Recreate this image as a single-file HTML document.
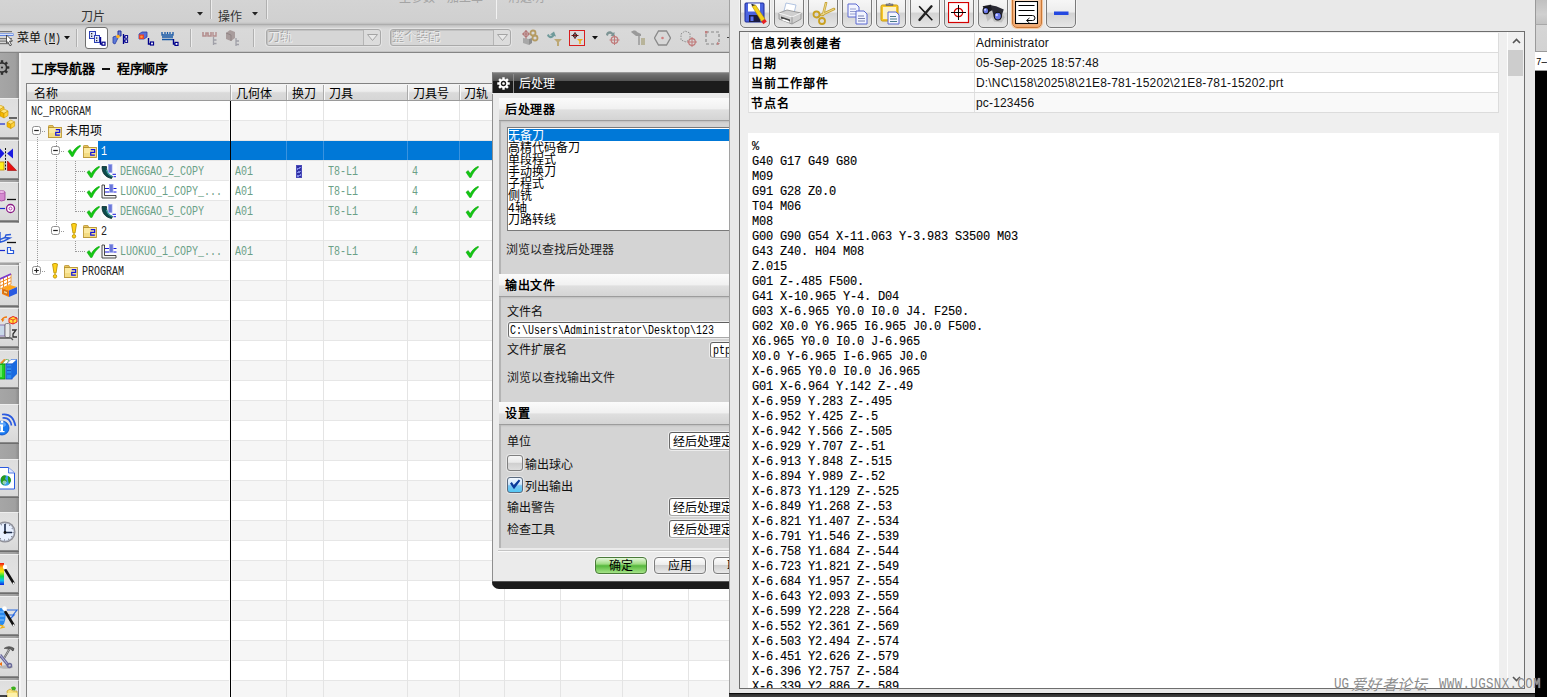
<!DOCTYPE html>
<html lang="zh-CN"><head><meta charset="utf-8"><title>NX</title>
<style>
*{box-sizing:border-box;margin:0;padding:0}
html,body{width:1547px;height:697px;overflow:hidden}
body{position:relative;background:#ebebeb;font-family:"Liberation Sans",sans-serif;font-size:12px;color:#000;line-height:1}
.a{position:absolute}
.t{position:absolute;white-space:nowrap;font-size:12px;line-height:12px}
.b{font-weight:bold}
.mono{font-family:"Liberation Mono",monospace}
.ss{font-family:"Liberation Mono",monospace;font-size:12px;display:inline-block;transform:scaleX(.8333);transform-origin:0 50%;letter-spacing:0}
/* top ribbon */
#ribbon{left:0;top:0;width:730px;height:25px;background:linear-gradient(#d4d4d4,#d0d0d0 22px,#bcbcbc 24px);border-bottom:1px solid #adadad}
#tbar{left:0;top:25px;width:730px;height:27px;background:linear-gradient(#bebebe 0,#d0d0d0 2px,#d9d9d9 4px,#d6d6d6 100%)}
#tbline{left:0;top:51px;width:730px;height:3px;background:linear-gradient(#c4c4c4 0 1px,#858585 1px 2px,#f6f6f6 2px 3px)}
.vsep{position:absolute;width:2px;border-left:1px solid #b0b0b0;border-right:1px solid #ececec}
.combo{position:absolute;height:17px;border:1px solid #a9a9a9;border-radius:3px;background:#d6d6d6;box-shadow:inset 1px 1px 0 #c2c2c2,0 0 0 1px #e3e3e3}
.combo .arr{position:absolute;right:0;top:0;width:17px;height:15px;border-left:1px solid #b5b5b5;background:#dcdcdc;border-radius:0 3px 3px 0}
/* left side bar */
#side{left:0;top:53px;width:19px;height:644px;background:linear-gradient(90deg,#a6a6a6,#a0a0a0 80%,#8a8a8a)}
#sidew{left:19px;top:53px;width:2px;height:644px;background:#f4f4f4}
.sbtn{position:absolute;left:0;width:19px;overflow:hidden;background:linear-gradient(#dedede,#e2e2e2 50%,#d8d8d8);border-top:1px solid #eee;border-right:1px solid #8a8a8a;border-bottom:1px solid #8a8a8a;box-shadow:0 1px 0 #6e6e6e}
/* navigator */
#nav{left:21px;top:53px;width:709px;height:644px;background:#ebebeb}
#tbl{left:26px;top:83px;width:704px;height:614px;background:#fff;border-top:1px solid #828282;border-left:1px solid #828282;overflow:hidden}
#thead{left:0;top:0;width:704px;height:17px;background:linear-gradient(#f4f4f4 0%,#ededed 45%,#dadada 55%,#d6d6d6 100%);border-bottom:1px solid #9a9a9a}
.hs{position:absolute;top:1px;width:2px;height:15px;border-left:1px solid #aaa;border-right:1px solid #fafafa}
.row{position:absolute;left:0;width:704px;height:20px;border-bottom:1px solid #e6e6e6}
.row.odd{background:#f6f6f6}
.cl{position:absolute;top:17px;width:1px;height:600px;background:#e4e4e4}
.gr{color:#5f9a7c}
/* dialog */
#dlg{left:492px;top:72px;width:238px;height:517px;background:#ebebeb;border-radius:0 0 0 7px;overflow:hidden}
.sech{position:absolute;left:7px;width:231px;height:23px;background:linear-gradient(#fbfbfb 0%,#f1f1f1 48%,#dfdfdf 55%,#d4d4d4 100%);border-bottom:1px solid #9c9c9c}
.secb{position:absolute;left:7px;width:231px;background:#d4d4d4;border-left:2px solid #b4b4b4;box-shadow:inset 0 2px 2px -1px #bdbdbd}
.inp{position:absolute;background:#fff;border:1px solid #8a8a8a;border-top-color:#5e5e5e;border-left-color:#6a6a6a;border-bottom-color:#a8a8a8;border-radius:3px;box-shadow:0 0 0 1px #ececec}
.btn{position:absolute;height:17px;border:1px solid #7e7e7e;border-radius:4px;background:linear-gradient(#fdfdfd 0%,#ededed 45%,#cfcfcf 50%,#e9e9e9 100%);box-shadow:0 0 0 1px #f6f6f6;text-align:center;font-size:12px;line-height:17px}
/* info window */
#info{left:729px;top:0;width:806px;height:693px;background:#e9e9e9;border-left:1px solid #a2a2a2}
#infobot{left:729px;top:693px;width:806px;height:4px;background:linear-gradient(#0c0c0c 0 1px,#2e2e2e 1px,#444 100%)}
.ib{position:absolute;top:-6px;width:30px;height:34px;border:1px solid #7a7a7a;border-radius:5px;background:linear-gradient(#fafafa 0%,#ededed 52%,#d3d3d3 58%,#e6e6e6 100%);box-shadow:0 0 0 1px #f4f4f4}
#list{left:739px;top:31px;width:786px;height:658px;background:#efefef;border:1px solid #6e6e6e}
.ir{position:absolute;margin-top:1px;left:8px;width:751px;height:20px;border-bottom:1px solid #dcdcdc;border-left:1px solid #e2e2e2;border-right:1px solid #dcdcdc;background:#fff}
.ir.alt{background:#f9f9f9}
.ir .k{position:absolute;left:2px;top:5px;font-weight:bold;font-size:12px;line-height:12px;white-space:nowrap;letter-spacing:1px}
.ir .v{position:absolute;left:227px;top:4px;font-size:12px;line-height:13px;white-space:nowrap;color:#111;letter-spacing:.17px}
.ir .s{position:absolute;left:225px;top:0;width:1px;height:19px;background:#e0e0e0}
#code{margin-top:1px;left:8px;top:100px;width:751px;height:555px;background:#fff;overflow:hidden}
#code pre{position:absolute;left:4px;top:7px;font-family:"Liberation Mono",monospace;font-size:12px;line-height:15px;letter-spacing:-.2px;color:#000;-webkit-text-stroke:.12px #000}
#sb{left:767px;top:0;width:17px;height:656px;background:#f0f0f0;border-left:1px solid #fdfdfd}
#thumb{left:0;top:18px;width:15px;height:26px;background:#cdcdcd}
/* right strip */
#rs{left:1535px;top:0;width:12px;height:697px;background:#000}

#dlg .b{letter-spacing:.7px;text-shadow:0 0 2px #fff,0 0 1px #fff}
</style></head><body>
<!-- ribbon -->
<div class="a" id="ribbon">
  <div class="t" style="left:81px;top:11px;color:#333">刀片</div>
  <svg class="a" style="left:197px;top:12px" width="6" height="4"><path d="M0 0h6L3 3.500z" fill="#222"/></svg>
  <div class="vsep" style="left:210px;top:0;height:19px"></div>
  <div class="t" style="left:218px;top:11px;color:#333">操作</div>
  <svg class="a" style="left:252px;top:12px" width="6" height="4"><path d="M0 0h6L3 3.500z" fill="#222"/></svg>
  <div class="vsep" style="left:266px;top:0;height:19px"></div>
  <div class="t" style="left:399px;top:-8px;color:#a4a4a4">主参数</div>
  <div class="t" style="left:447px;top:-8px;color:#a4a4a4">加工车</div>
  <div class="a" style="left:496px;top:0;width:1px;height:19px;background:#f2f2f2"></div>
  <div class="t" style="left:508px;top:-8px;color:#a4a4a4">消透明</div>
</div>
<div class="a" id="tbar">
  <!-- menu icon -->
  <svg class="a" style="left:0;top:5px" width="15" height="16" viewBox="0 0 15 16">
    <rect x="0" y="1" width="12" height="1.200" fill="#777"/><rect x="0" y="3.500" width="13.500" height="2.300" fill="#3f6fe6"/><rect x="0" y="4.200" width="13" height=".8" fill="#fff"/><rect x="0" y="8" width="12" height="1.200" fill="#777"/><rect x="0" y="10.500" width="12" height="1.200" fill="#777"/><rect x="0" y="13" width="9" height="1.200" fill="#777"/>
    <path d="M6.500 5l6 6h-3l2 4-1.600.8-2-4L6.500 13z" fill="#fff" stroke="#333" stroke-width=".8"/>
  </svg>
  <div class="t" style="left:17px;top:7px;color:#111">菜单<span class="ss" style="width:20px;margin-left:2px">(<u>M</u>)</span></div>
  <svg class="a" style="left:64px;top:11px" width="6" height="4"><path d="M0 0h6L3 3.500z" fill="#111"/></svg>
  <div class="vsep" style="left:76px;top:4px;height:18px"></div>
  <div class="a" style="left:85px;top:2px;width:23px;height:22px;background:#fff;border:1px solid #6f6f6f;border-radius:3px"></div>
  <!-- icon1: program order -->
  <svg class="a" style="left:89px;top:6px" width="17" height="16" viewBox="0 0 17 16">
    <rect x=".5" y=".5" width="6" height="7" fill="#dfe6fb" stroke="#2b3fb5"/><rect x="2" y="2" width="1.3" height="1.3" fill="#223"/><rect x="2" y="4.6" width="1.3" height="1.3" fill="#223"/>
    <rect x="5.5" y="4.5" width="5" height="7" fill="#dfe6fb" stroke="#2b3fb5"/><rect x="7" y="6.4" width="1.3" height="1.3" fill="#223"/><rect x="7" y="9" width="1.3" height="1.3" fill="#223"/>
    <path d="M11.5 6v7h2" fill="none" stroke="#00008b" stroke-width="1.4"/><rect x="13" y="11.2" width="3" height="3" fill="#fff" stroke="#00008b" stroke-width="1.2"/>
  </svg>
  <!-- icon2: tool view -->
  <svg class="a" style="left:112px;top:5px" width="17" height="18" viewBox="0 0 17 18">
    <path d="M6 1h3v5H6z" fill="#6f7fd0" stroke="#1f2f9b"/><path d="M1 7l3-1 2 2-3 6-2-1z" fill="#5b79d6" stroke="#2a3ea8" stroke-width=".8"/><circle cx="6" cy="6.5" r="1.8" fill="#ffb020"/>
    <path d="M11.5 4v10M11.5 7h3M11.5 11h3" fill="none" stroke="#00008b" stroke-width="1.3"/><rect x="13" y="5.6" width="2.6" height="2.6" fill="#fff" stroke="#00008b"/><rect x="13" y="9.8" width="2.6" height="2.6" fill="#fff" stroke="#00008b"/>
  </svg>
  <!-- icon3: geometry view -->
  <svg class="a" style="left:138px;top:5px" width="17" height="18" viewBox="0 0 17 18">
    <path d="M1 4l3-2h5v5l-3 2H1z" fill="#5a6fd8" stroke="#2a3ea8" stroke-width=".8"/><path d="M1 4.500h5V9H1z" fill="#e8402a"/><circle cx="3.5" cy="6.700" r="1.300" fill="#ff9a30"/>
    <path d="M10.500 8v6h3" fill="none" stroke="#00008b" stroke-width="1.4"/><rect x="12.500" y="12" width="3" height="3" fill="#fff" stroke="#00008b" stroke-width="1.2"/>
  </svg>
  <!-- icon4: method view -->
  <svg class="a" style="left:161px;top:5px" width="18" height="18" viewBox="0 0 18 18">
    <path d="M1 2v3h11V2M4 2v2M6.500 2v2M9 2v2" fill="none" stroke="#1557a6" stroke-width="1.3"/><path d="M1 7h11M1 9.500h11" stroke="#1557a6" stroke-width="1.4"/>
    <path d="M12.500 9v5h2" fill="none" stroke="#00008b" stroke-width="1.4"/><rect x="14" y="12.400" width="3" height="3" fill="#fff" stroke="#00008b" stroke-width="1.2"/>
  </svg>
  <div class="vsep" style="left:190px;top:4px;height:18px"></div>
  <!-- gray icons -->
  <svg class="a" style="left:202px;top:5px" width="18" height="18" viewBox="0 0 18 18">
    <path d="M1 2v4h3V3h2v3h3V2" fill="none" stroke="#b48f8f" stroke-width="1.6"/><path d="M11 2v4h3V2" fill="none" stroke="#b48f8f" stroke-width="1.4"/><path d="M11.500 7v8M11.500 10h3M11.500 13.500h3" stroke="#a0a0a8" stroke-width="1.3" fill="none"/>
  </svg>
  <svg class="a" style="left:224px;top:4px" width="18" height="19" viewBox="0 0 18 19">
    <path d="M2 4l4-3 5 2v6l-4 3-5-2z" fill="#a89c9c"/><path d="M2 4l5 2v6" fill="none" stroke="#8f8484"/><path d="M12 9v8M12 12h3M12 15.500h3" stroke="#a0a0a8" stroke-width="1.3" fill="none"/>
  </svg>
  <div class="vsep" style="left:253px;top:4px;height:18px"></div>
  <!-- combos -->
  <div class="combo" style="left:266px;top:4px;width:115px"><div class="t" style="left:2px;top:2px;color:#ececec;text-shadow:-1px -1px 0 #a2a2a2">刀轨</div><div class="arr"><svg class="a" style="left:3px;top:4px" width="11" height="7"><path d="M.5.5h10L5.500 6.500z" fill="#e8e8e8" stroke="#a4a4a4"/></svg></div></div>
  <div class="combo" style="left:390px;top:4px;width:121px"><div class="t" style="left:2px;top:2px;color:#ececec;text-shadow:-1px -1px 0 #a2a2a2">整个装配</div><div class="arr"><svg class="a" style="left:3px;top:4px" width="11" height="7"><path d="M.5.5h10L5.500 6.500z" fill="#e8e8e8" stroke="#a4a4a4"/></svg></div></div>
  <!-- right side icons -->
  <svg class="a" style="left:521px;top:4px" width="18" height="18" viewBox="0 0 18 18">
    <path d="M5 1v9M1 5h9" stroke="#b07070" stroke-width="1.2"/><circle cx="5" cy="5" r="2.500" fill="none" stroke="#b07070"/><path d="M2 9l6 1v6l-6-2z" fill="#a8a8a8"/><path d="M8 10l3-1v5l-3 2z" fill="#8e8e8e"/><circle cx="12" cy="4" r="2.500" fill="none" stroke="#b59b62" stroke-width="1.800"/><circle cx="14" cy="9" r="2.500" fill="none" stroke="#b59b62" stroke-width="1.800"/>
  </svg>
  <svg class="a" style="left:546px;top:5px" width="18" height="18" viewBox="0 0 18 18">
    <path d="M1 5c1 4 6 4 7 1l2 .5-2-5-4 3 2 .5c-1 1.500-3 1-3-1z" fill="#6f9a9a"/><path d="M8 9h8l-3 3v4h-2v-4z" fill="#bda874"/>
  </svg>
  <div class="a" style="left:569px;top:5px;width:16px;height:16px;border:1px solid #d81e1e;background:#dcdcdc"></div>
  <svg class="a" style="left:570px;top:6px" width="14" height="14" viewBox="0 0 14 14">
    <path d="M5 1v7M1.500 4.500h7" stroke="#8c1010" stroke-width="1"/><circle cx="5" cy="4.500" r="1.800" fill="none" stroke="#222" stroke-width="1"/><path d="M7 8h6l-2.200 2.200V13H9.200v-2.800z" fill="#f0b020"/>
  </svg>
  <svg class="a" style="left:592px;top:11px" width="6" height="4"><path d="M0 0h6L3 3.500z" fill="#111"/></svg>
  <svg class="a" style="left:604px;top:4px" width="18" height="18" viewBox="0 0 18 18">
    <path d="M2 6c0-4 5-5 7-2l1.500-1v4h-4l1.300-1.200C6.500 4 4 4.500 4 7z" fill="#7d9494"/><circle cx="10.500" cy="11" r="3.300" fill="none" stroke="#c07a7a" stroke-width="1.200"/><path d="M10.500 6v10M5.500 11h10" stroke="#c07a7a" stroke-width="1"/>
  </svg>
  <svg class="a" style="left:630px;top:4px" width="18" height="18" viewBox="0 0 18 18">
    <path d="M1 3c2-2 5-2 6 0l4 2v2H6z" fill="#9a9a9a"/><path d="M8 7h2v9H8z" fill="#a8a8a8"/><rect x="11" y="9" width="4" height="7" fill="#b8b49a"/>
  </svg>
  <svg class="a" style="left:654px;top:4px" width="17" height="18" viewBox="0 0 17 18">
    <path d="M4.500 2h8l4 7-4 7h-8l-4-7z" fill="none" stroke="#8a8a8a" stroke-width="1.300"/><circle cx="8.500" cy="9" r="1.300" fill="#d08080"/>
  </svg>
  <svg class="a" style="left:679px;top:4px" width="19" height="19" viewBox="0 0 19 19">
    <path d="M2 5l4-3 5 2v6l-4 3-5-2z" fill="none" stroke="#8c8c8c" stroke-dasharray="1.500 1.200"/><circle cx="13" cy="13" r="3.300" fill="none" stroke="#c07a7a" stroke-width="1.200"/><path d="M13 8v10M8 13h10" stroke="#c07a7a"/>
  </svg>
  <svg class="a" style="left:704px;top:5px" width="18" height="18" viewBox="0 0 18 18">
    <rect x="2" y="2" width="13" height="12" fill="none" stroke="#8a8a8a" stroke-width="1.200" stroke-dasharray="3 2"/><rect x="1" y="1" width="2.500" height="2.500" fill="#c08080"/><path d="M13 12l3 1.500-3 1.500z" fill="#c08080"/>
  </svg>
  <div class="a" style="left:727px;top:12px;width:3px;height:1px;background:#444"></div>
</div>
<div class="a" id="tbline"></div>
<!-- left sidebar -->
<div class="a" id="side"></div>
<div class="a" id="sidew"></div>

<svg class="a" style="left:-6px;top:60px" width="17" height="15" viewBox="0 0 17 15"><g fill="none" stroke="#2e2e2e" stroke-width="1.600"><circle cx="8" cy="7.500" r="4.600"/></g><g fill="#2e2e2e"><rect x="6.800" y="0.200" width="2.400" height="2.600" transform="rotate(0 8 7.500)"/><rect x="6.800" y="0.200" width="2.400" height="2.600" transform="rotate(45 8 7.500)"/><rect x="6.800" y="0.200" width="2.400" height="2.600" transform="rotate(90 8 7.500)"/><rect x="6.800" y="0.200" width="2.400" height="2.600" transform="rotate(135 8 7.500)"/><rect x="6.800" y="0.200" width="2.400" height="2.600" transform="rotate(180 8 7.500)"/><rect x="6.800" y="0.200" width="2.400" height="2.600" transform="rotate(225 8 7.500)"/><rect x="6.800" y="0.200" width="2.400" height="2.600" transform="rotate(270 8 7.500)"/><rect x="6.800" y="0.200" width="2.400" height="2.600" transform="rotate(315 8 7.500)"/></g><circle cx="8" cy="7.500" r="1.100" fill="#2e2e2e"/></svg>
<div class="sbtn" style="top:98px;height:40px"><svg class="a" style="left:0;top:6px" width="19" height="26" viewBox="0 0 19 26"><g transform="translate(-4,0) scale(1)"><path d="M0 2.500 4 0l4 2-4 2.500z" fill="#ffe680" stroke="#c99500" stroke-width=".6"/><path d="M0 2.500 4 4.500V9L0 7z" fill="#f5b800" stroke="#c99500" stroke-width=".6"/><path d="M8 2 4 4.500V9L8 6.500z" fill="#ffd23a" stroke="#c99500" stroke-width=".6"/></g><g transform="translate(0,4) scale(1)"><path d="M0 2.500 4 0l4 2-4 2.500z" fill="#ffe680" stroke="#c99500" stroke-width=".6"/><path d="M0 2.500 4 4.500V9L0 7z" fill="#f5b800" stroke="#c99500" stroke-width=".6"/><path d="M8 2 4 4.500V9L8 6.500z" fill="#ffd23a" stroke="#c99500" stroke-width=".6"/></g><path d="M9 13h8" stroke="#111" stroke-width="1.200"/><path d="M0 19h5" stroke="#1a2ad0" stroke-width="1.200"/><g transform="translate(7,15) scale(0.95)"><path d="M0 2.500 4 0l4 2-4 2.500z" fill="#ffe680" stroke="#c99500" stroke-width=".6"/><path d="M0 2.500 4 4.500V9L0 7z" fill="#f5b800" stroke="#c99500" stroke-width=".6"/><path d="M8 2 4 4.500V9L8 6.500z" fill="#ffd23a" stroke="#c99500" stroke-width=".6"/></g></svg></div>
<div class="sbtn" style="top:140px;height:39px"><svg class="a" style="left:0;top:6px" width="19" height="26" viewBox="0 0 19 26"><path d="M0 1.500 4.500 6.500 0 11.500zM13 1.500 7 6.500l6 5z" fill="#1a1ae0"/><path d="M5.500 1v23" stroke="#111" stroke-width="1" stroke-dasharray="2 1.300"/><rect x="-1" y="15" width="5" height="8" fill="#ffef1a" stroke="#c79a10"/><path d="M7.500 14v9.500h9z" fill="#e81010" stroke="#9a0808" stroke-width=".6"/></svg></div>
<div class="sbtn" style="top:182px;height:39px"><svg class="a" style="left:0;top:7px" width="19" height="26" viewBox="0 0 19 26"><path d="M-2 2v8q3.500 2 7 0V2z" fill="#d58ad0" stroke="#9a3a94" stroke-width=".8"/><ellipse cx="1.500" cy="2" rx="3.500" ry="1.400" fill="#f0c2ec" stroke="#9a3a94" stroke-width=".6"/><path d="M7 9.500h9" stroke="#111" stroke-width="1.300"/><path d="M0 18.500h5" stroke="#1a2ad0" stroke-width="1.200"/><circle cx="10.500" cy="18.500" r="4" fill="#fff" stroke="#8a1a84" stroke-width="1.300"/><circle cx="10.500" cy="18.500" r="1.500" fill="none" stroke="#b83ab0" stroke-width="1"/></svg></div>
<div class="sbtn" style="top:223px;height:40px;background:#ececec;border-bottom:1px solid #c4c4c4;border-right:0;width:21px;box-shadow:none"><svg class="a" style="left:0;top:8px" width="19" height="26" viewBox="0 0 19 26"><path d="M0 0v11M-1 8 5 5.500 10 6 4 9-1 10.500M5 5.500 6 3l5-.5" fill="none" stroke="#2a5ad8" stroke-width="1.400"/><path d="M7 10.500h9" stroke="#111" stroke-width="1.300"/><path d="M0 18.500h5" stroke="#1a2ad0" stroke-width="1.200"/><path d="M7.500 15.500h3v3h3v3h-6z" fill="#fff" stroke="#2a5ad8" stroke-width="1.200"/></svg></div>
<div class="sbtn" style="top:265px;height:41px"><svg class="a" style="left:0;top:7px" width="19" height="28" viewBox="0 0 19 28"><path d="M0 6 11 1v10L0 16z" fill="#fff" stroke="#f08a20" stroke-width=".8"/><path d="M0 9.500 11 4.500M0 13 11 8M3.500 4.500v10M7.500 2.700v10" stroke="#f08a20" stroke-width="1"/><path d="M0 6 11 1" stroke="#7a3ad0" stroke-width="1.600"/><path d="M2 15l8-3 7 2-8 3.500z" fill="#ffa51a"/><path d="M2 15l7 2.500V24l-7-3z" fill="#f07a10"/><path d="M9 17.500 17 14v6.500L9 24z" fill="#2a5ae0"/><rect x="3.500" y="17.500" width="4" height="2.500" fill="#ffd28a" stroke="#a04a00" stroke-width=".5" transform="skewY(18) translate(0,-1.200)"/></svg></div>
<div class="sbtn" style="top:308px;height:39px"><svg class="a" style="left:0;top:6px" width="19" height="28" viewBox="0 0 19 28"><path d="M2 5Q3 2 7 2" fill="none" stroke="#f07a10" stroke-width="1.500"/><path d="M1 4l1.500 3 2-2.500z" fill="#f07a10"/><path d="M9 3.500l4-2 4 1.500v4l-4 2-4-1.500z" fill="#ffe23a" stroke="#e82020" stroke-width="1"/><path d="M9 3.500l4 1.500v4M13 5l4-2" fill="none" stroke="#e82020" stroke-width=".8"/><rect x="-1" y="10" width="6" height="11" fill="#c8d8e8" stroke="#7a5aa0" stroke-width=".8"/><rect x="5" y="8.500" width="5" height="14" rx="1.500" fill="#e8e8e8" stroke="#666" stroke-width=".8"/><path d="M0 23h11l2 2" fill="none" stroke="#555" stroke-width="1.300"/><path d="M12 15h4l-3 4v3h4" fill="none" stroke="#333" stroke-width="1.300"/></svg></div>
<div class="sbtn" style="top:350px;height:38px"><svg class="a" style="left:0;top:7px" width="19" height="26" viewBox="0 0 19 26"><path d="M0 5 4 1l2 .5L2 6z" fill="#f08a20"/><path d="M2 6 6 1.500 9 2 6.500 6z" fill="#fff" stroke="#2aa02a" stroke-width=".6"/><path d="M6.500 6 11 1.500h6L12 6z" fill="#fff" stroke="#2a6ae0" stroke-width=".6"/><rect x="-1" y="6" width="6" height="15" fill="#22d022" stroke="#0a8a0a" stroke-width=".8"/><path d="M1 7v12" stroke="#7af07a" stroke-width="1.500"/><rect x="6" y="6" width="6" height="15" fill="#2a8af0" stroke="#1a4ac0" stroke-width=".8"/><path d="M12 6 17 1.500V16l-5 5z" fill="#1a6ae0"/><path d="M7 9h4M7 12.500h4M7 16h4" stroke="#1a4ac0" stroke-width=".9"/></svg></div>
<div class="sbtn" style="top:404px;height:39px"><svg class="a" style="left:0;top:6px" width="19" height="26" viewBox="0 0 19 26"><path d="M2 3.500Q13 2 15.500 15" fill="none" stroke="#2a5ae0" stroke-width="1.600"/><path d="M2.500 7Q10 6 11.500 14.500" fill="none" stroke="#2a5ae0" stroke-width="1.600"/><circle cx="2" cy="17" r="7" fill="#1a7af0" stroke="#0a4ac0" stroke-width=".8"/><ellipse cx="1" cy="13.500" rx="5" ry="3" fill="#8ac2ff" opacity=".6"/><path d="M0 13.500h3v6.500h1.500v1.200H-1V20H.5v-5H-.5zM.8 10.800a1.300 1.300 0 1 0 2.600 0 1.300 1.300 0 1 0-2.600 0" fill="#fff"/></svg></div>
<div class="sbtn" style="top:459px;height:38px"><svg class="a" style="left:0;top:6px" width="19" height="26" viewBox="0 0 19 26"><path d="M-1 1.500h9.500l6 5.500v16H-1z" fill="#fff" stroke="#2a5ae0" stroke-width="1"/><path d="M8.500 1.500V7h6" fill="#dfe8ff" stroke="#2a5ae0" stroke-width=".8"/><circle cx="5.500" cy="14.500" r="5.300" fill="#3aa0e8"/><path d="M1 12q2-4 5-2l-1 3 2 2-3 4q-4-1-3-7zM8 10q3 1 3 5l-2 3-1-4z" fill="#2a9a1a"/><circle cx="4.500" cy="16.500" r="2" fill="#bfe6ff" opacity=".7"/></svg></div>
<div class="sbtn" style="top:512px;height:39px"><svg class="a" style="left:0;top:6px" width="19" height="26" viewBox="0 0 19 26"><circle cx="5" cy="13" r="10.500" fill="#8e8e96" /><circle cx="5" cy="13" r="9" fill="#e8f0ff" stroke="#b0b8c8" stroke-width=".6"/><circle cx="5" cy="13" r="8" fill="none" stroke="#334" stroke-width="1" stroke-dasharray=".8 3.400"/><path d="M5 5v8.500h7" fill="none" stroke="#1a2a4a" stroke-width="1.600"/><circle cx="5" cy="13.500" r="1.400" fill="#111"/></svg></div>
<div class="sbtn" style="top:554px;height:39px"><svg class="a" style="left:0;top:7px" width="19" height="26" viewBox="0 0 19 26"><defs><linearGradient id="rb" x1="0" y1="0" x2="0" y2="1"><stop offset="0" stop-color="#f01010"/><stop offset=".2" stop-color="#ffb010"/><stop offset=".4" stop-color="#e8f010"/><stop offset=".6" stop-color="#10e040"/><stop offset=".8" stop-color="#10c0f0"/><stop offset="1" stop-color="#1020e0"/></linearGradient></defs><rect x="-1" y="1" width="5" height="22" fill="url(#rb)"/><path d="M5.500 8 13.500 21" stroke="#111" stroke-width="2.600" stroke-linecap="round"/><circle cx="5" cy="5" r="2.200" fill="#fff"/><circle cx="13.600" cy="21.300" r="1" fill="#fff"/></svg></div>
<div class="sbtn" style="top:596px;height:39px"><svg class="a" style="left:0;top:7px" width="19" height="26" viewBox="0 0 19 26"><ellipse cx="1" cy="13" rx="4.500" ry="9" fill="#2a8af0"/><path d="M-1 8h5M-1 12h5.500M-1 16h5" stroke="#8ac8ff" stroke-width="1"/><path d="M7 6h10l-4 5H7M5 11h9l-4 4" fill="none" stroke="#2a6ae0" stroke-width="1.200"/><path d="M0 21l3 1-2 2 4-1" fill="none" stroke="#f0b010" stroke-width="1.200"/><path d="M5.500 8 13.500 21" stroke="#111" stroke-width="2.600" stroke-linecap="round"/><circle cx="4.500" cy="4.500" r="2.200" fill="#fff"/><circle cx="13.600" cy="21.300" r="1" fill="#fff"/></svg></div>
<div class="sbtn" style="top:638px;height:39px"><svg class="a" style="left:0;top:6px" width="19" height="26" viewBox="0 0 19 26"><ellipse cx="6" cy="22" rx="7" ry="1.800" fill="#a8a8a8" opacity=".7"/><path d="M4 3.500Q9 0 14 3.500L13 6 10 3.500 8 4.500" fill="#666" stroke="#333" stroke-width=".7"/><path d="M9.500 4 3 15" stroke="#5a5a5a" stroke-width="2"/><path d="M9.500 4 3 15" stroke="#d8d8d8" stroke-width=".7"/><path d="M0 10 8.500 20.500" stroke="#6a6a9a" stroke-width="3"/><path d="M0 10 8.500 20.500" stroke="#b8b8e0" stroke-width="1"/><circle cx="9.500" cy="20.500" r="2" fill="none" stroke="#6a6a9a" stroke-width="1.500"/><path d="M-1 19l3-2v4z" fill="#f07010"/></svg></div>
<div class="sbtn" style="top:680px;height:20px"><svg class="a" style="left:0;top:5px" width="19" height="14" viewBox="0 0 19 14"><path d="M0 10h7v4" fill="none" stroke="#111" stroke-width="1.400"/><path d="M11 1.500q3-2 5 .5l-1 2.500-3-.5z" fill="#3ab01a"/><path d="M7 5l3-2 3 2h4l1 9H8z" fill="#f8e27a" stroke="#c8a020" stroke-width=".7"/><path d="M7 7h10l1 7H8z" fill="#fdf0a8"/></svg></div>
<svg width="0" height="0" style="position:absolute"><defs>
<symbol id="chk" viewBox="0 0 14 12"><path d="M1 6.200 3.200 4.600 5.200 7.600C7 4.500 9.500 1.800 13.200.3L13.600 1.200C10.500 3.500 8 7 6 11.500L4.600 11.600Z" fill="#12c812" stroke="#0a9a0a" stroke-width=".5"/></symbol>
<symbol id="fld" viewBox="0 0 15 13" preserveAspectRatio="none"><path d="M.5 2.500V1.300Q.5.500 1.300.5H5.200L6.200 2.500Z" fill="#e9c45a" stroke="#b7912c" stroke-width=".8"/><rect x=".5" y="2.500" width="14" height="10" fill="#fbe9a0" stroke="#b7912c" stroke-width=".9"/><rect x="1.300" y="8" width="12.400" height="4" fill="#f1d675" opacity=".7"/><path d="M8.300 4.700h4.200v2.600H8.300v2.900h4.400" fill="none" stroke="#1212e0" stroke-width="1.300"/></symbol>
<symbol id="op1" viewBox="0 0 16 15"><rect x="0" y="0" width="16" height="15" fill="#fff" opacity=".6"/><path d="M1 2.500C1 9 4 13 10.500 14.500L11.500 12.500C7 11 5.500 8 5.500 2.500Z" fill="#0e4a4a" stroke="#062a2a" stroke-width=".8"/><path d="M5.500 6C6.500 9.500 8.500 11.500 11.500 12.500" fill="none" stroke="#3aa0a0" stroke-width="1.200"/><rect x="7.500" y=".5" width="3.500" height="8" fill="#6a78d8" stroke="#9aa4ee" stroke-width=".7"/><path d="M11.500 10.300h3.500M12.500 12.700h2.500" stroke="#1a1ae0" stroke-width="1"/></symbol>
<symbol id="op2" viewBox="0 0 16 15"><rect x="0" y="0" width="16" height="15" fill="#fff" opacity=".6"/><path d="M1 1v13h14v-2.500H3.500V1Z" fill="#f4f4f4" stroke="#333" stroke-width=".9"/><rect x="8.500" y=".3" width="3.500" height="8" fill="#6a78d8" stroke="#9aa4ee" stroke-width=".7"/><path d="M4 4.500h4M4 8h4M12.500 4.500h3M12.500 8h3" stroke="#1a1ae0" stroke-width="1.100"/></symbol>
<symbol id="exc" viewBox="0 0 8 15" preserveAspectRatio="none"><path d="M1.500 1Q4 -.3 6.500 1L5 9.500H3Z" fill="#ffd21a" stroke="#b78e00" stroke-width=".8"/><circle cx="4" cy="12.500" r="1.700" fill="#ffd21a" stroke="#b78e00" stroke-width=".8"/></symbol>
<symbol id="minus" viewBox="0 0 9 9"><rect x=".5" y=".5" width="8" height="8" rx="2" fill="#fff" stroke="#8f8f8f"/><path d="M2.200 4.500h4.600" stroke="#222" stroke-width="1.200"/></symbol>
<symbol id="plus" viewBox="0 0 9 9"><rect x=".5" y=".5" width="8" height="8" rx="2" fill="#fff" stroke="#8f8f8f"/><path d="M2.200 4.500h4.600M4.500 2.200v4.600" stroke="#222" stroke-width="1.200"/></symbol>
</defs></svg>
<div class="a" id="nav"></div>
<div class="t b" style="left:31px;top:62px;font-size:13px;line-height:13px;letter-spacing:-.3px">工序导航器</div><div class="a" style="left:102px;top:68px;width:8px;height:2px;background:#111"></div><div class="t b" style="left:117px;top:62px;font-size:13px;line-height:13px;letter-spacing:-.3px">程序顺序</div>
<div class="a" id="tbl">
<div class="row" style="top:17px"></div>
<div class="row odd" style="top:37px"></div>
<div class="row" style="top:57px"></div>
<div class="row odd" style="top:77px"></div>
<div class="row" style="top:97px"></div>
<div class="row odd" style="top:117px"></div>
<div class="row" style="top:137px"></div>
<div class="row odd" style="top:157px"></div>
<div class="row" style="top:177px"></div>
<div class="row odd" style="top:197px"></div>
<div class="row" style="top:217px"></div>
<div class="row odd" style="top:237px"></div>
<div class="row" style="top:257px"></div>
<div class="row odd" style="top:277px"></div>
<div class="row" style="top:297px"></div>
<div class="row odd" style="top:317px"></div>
<div class="row" style="top:337px"></div>
<div class="row odd" style="top:357px"></div>
<div class="row" style="top:377px"></div>
<div class="row odd" style="top:397px"></div>
<div class="row" style="top:417px"></div>
<div class="row odd" style="top:437px"></div>
<div class="row" style="top:457px"></div>
<div class="row odd" style="top:477px"></div>
<div class="row" style="top:497px"></div>
<div class="row odd" style="top:517px"></div>
<div class="row" style="top:537px"></div>
<div class="row odd" style="top:557px"></div>
<div class="row" style="top:577px"></div>
<div class="row odd" style="top:597px"></div>
<div class="row" style="top:617px"></div>
<div class="a" style="left:203px;top:17px;width:1px;height:600px;background:#000;box-shadow:-1px 0 0 #fcfcfc,1px 0 0 #fcfcfc"></div>
<div class="a" style="left:71px;top:57px;width:640px;height:19px;background:#0078d7"></div>
<div class="cl" style="left:259px"></div>
<div class="cl" style="left:296px"></div>
<div class="cl" style="left:380px"></div>
<div class="cl" style="left:432px"></div>
<div class="cl" style="left:477px"></div>
<div class="cl" style="left:533px"></div>
<div class="cl" style="left:595px"></div>
<div class="cl" style="left:661px"></div>
<div class="a" style="left:259px;top:57px;width:1px;height:19px;background:#3a93df"></div>
<div class="a" style="left:296px;top:57px;width:1px;height:19px;background:#3a93df"></div>
<div class="a" style="left:380px;top:57px;width:1px;height:19px;background:#3a93df"></div>
<div class="a" style="left:432px;top:57px;width:1px;height:19px;background:#3a93df"></div>
<div class="a" style="left:203px;top:17px;width:1px;height:600px;background:#000"></div>
<div class="a" id="thead">
<div class="t" style="left:7px;top:4px">名称</div>
<div class="t" style="left:209px;top:4px">几何体</div>
<div class="t" style="left:265px;top:4px">换刀</div>
<div class="t" style="left:302px;top:4px">刀具</div>
<div class="t" style="left:386px;top:4px">刀具号</div>
<div class="t" style="left:437px;top:4px">刀轨</div>
<div class="hs" style="left:203px"></div>
<div class="hs" style="left:259px"></div>
<div class="hs" style="left:296px"></div>
<div class="hs" style="left:380px"></div>
<div class="hs" style="left:432px"></div>
</div>
<div class="a" style="left:10px;top:53px;width:1px;height:130px;background:repeating-linear-gradient(#9a9a9a 0 1px,transparent 1px 2px)"></div>
<div class="a" style="left:29px;top:57px;width:1px;height:5px;background:repeating-linear-gradient(#9a9a9a 0 1px,transparent 1px 2px)"></div>
<div class="a" style="left:29px;top:72px;width:1px;height:70px;background:repeating-linear-gradient(#9a9a9a 0 1px,transparent 1px 2px)"></div>
<div class="a" style="left:48px;top:77px;width:1px;height:51px;background:repeating-linear-gradient(#9a9a9a 0 1px,transparent 1px 2px)"></div>
<div class="a" style="left:48px;top:157px;width:1px;height:11px;background:repeating-linear-gradient(#9a9a9a 0 1px,transparent 1px 2px)"></div>
<div class="a" style="left:15px;top:47px;height:1px;width:4px;background:repeating-linear-gradient(90deg,#9a9a9a 0 1px,transparent 1px 2px)"></div>
<div class="a" style="left:34px;top:67px;height:1px;width:4px;background:repeating-linear-gradient(90deg,#9a9a9a 0 1px,transparent 1px 2px)"></div>
<div class="a" style="left:34px;top:147px;height:1px;width:4px;background:repeating-linear-gradient(90deg,#9a9a9a 0 1px,transparent 1px 2px)"></div>
<div class="a" style="left:15px;top:187px;height:1px;width:4px;background:repeating-linear-gradient(90deg,#9a9a9a 0 1px,transparent 1px 2px)"></div>
<div class="a" style="left:49px;top:87px;height:1px;width:9px;background:repeating-linear-gradient(90deg,#9a9a9a 0 1px,transparent 1px 2px)"></div>
<div class="a" style="left:49px;top:107px;height:1px;width:9px;background:repeating-linear-gradient(90deg,#9a9a9a 0 1px,transparent 1px 2px)"></div>
<div class="a" style="left:49px;top:127px;height:1px;width:9px;background:repeating-linear-gradient(90deg,#9a9a9a 0 1px,transparent 1px 2px)"></div>
<div class="a" style="left:49px;top:167px;height:1px;width:9px;background:repeating-linear-gradient(90deg,#9a9a9a 0 1px,transparent 1px 2px)"></div>
<div class="t " style="left:4px;top:21px;color:#222"><span class="ss">NC_PROGRAM</span></div>
<svg class="a" style="left:5px;top:42px" width="9" height="9"><use href="#minus"/></svg>
<svg class="a" style="left:21px;top:41px" width="14" height="13"><use href="#fld"/></svg>
<div class="t" style="left:39px;top:41px">未用项</div>
<svg class="a" style="left:24px;top:62px" width="9" height="9"><use href="#minus"/></svg>
<svg class="a" style="left:40px;top:61px" width="14" height="12"><use href="#chk"/></svg>
<svg class="a" style="left:56px;top:61px" width="14" height="13"><use href="#fld"/></svg>
<div class="t " style="left:74px;top:61px;color:#fff"><span class="ss">1</span></div>
<svg class="a" style="left:59px;top:82px" width="14" height="12"><use href="#chk"/></svg>
<svg class="a" style="left:74px;top:80px" width="16" height="15"><use href="#op1"/></svg>
<div class="t " style="left:93px;top:81px;color:#6aa086"><span class="ss">DENGGAO_2_COPY</span></div>
<div class="t " style="left:208px;top:81px;color:#6aa086"><span class="ss">A01</span></div>
<div class="t " style="left:301px;top:81px;color:#6aa086"><span class="ss">T8-L1</span></div>
<div class="t " style="left:385px;top:81px;color:#6aa086"><span class="ss">4</span></div>
<svg class="a" style="left:438px;top:82px" width="14" height="12"><use href="#chk"/></svg>
<div class="a" style="left:269px;top:81px;width:6px;height:13px;background:repeating-linear-gradient(160deg,#2e2ea0 0 2px,#7f8ae8 2px 3.500px);border:1px solid #4a4ab8"></div>
<svg class="a" style="left:59px;top:102px" width="14" height="12"><use href="#chk"/></svg>
<svg class="a" style="left:74px;top:100px" width="16" height="15"><use href="#op2"/></svg>
<div class="t " style="left:93px;top:101px;color:#6aa086"><span class="ss">LUOKUO_1_COPY_...</span></div>
<div class="t " style="left:208px;top:101px;color:#6aa086"><span class="ss">A01</span></div>
<div class="t " style="left:301px;top:101px;color:#6aa086"><span class="ss">T8-L1</span></div>
<div class="t " style="left:385px;top:101px;color:#6aa086"><span class="ss">4</span></div>
<svg class="a" style="left:438px;top:102px" width="14" height="12"><use href="#chk"/></svg>
<svg class="a" style="left:59px;top:122px" width="14" height="12"><use href="#chk"/></svg>
<svg class="a" style="left:74px;top:120px" width="16" height="15"><use href="#op1"/></svg>
<div class="t " style="left:93px;top:121px;color:#6aa086"><span class="ss">DENGGAO_5_COPY</span></div>
<div class="t " style="left:208px;top:121px;color:#6aa086"><span class="ss">A01</span></div>
<div class="t " style="left:301px;top:121px;color:#6aa086"><span class="ss">T8-L1</span></div>
<div class="t " style="left:385px;top:121px;color:#6aa086"><span class="ss">4</span></div>
<svg class="a" style="left:438px;top:122px" width="14" height="12"><use href="#chk"/></svg>
<svg class="a" style="left:59px;top:162px" width="14" height="12"><use href="#chk"/></svg>
<svg class="a" style="left:74px;top:160px" width="16" height="15"><use href="#op2"/></svg>
<div class="t " style="left:93px;top:161px;color:#6aa086"><span class="ss">LUOKUO_1_COPY_...</span></div>
<div class="t " style="left:208px;top:161px;color:#6aa086"><span class="ss">A01</span></div>
<div class="t " style="left:301px;top:161px;color:#6aa086"><span class="ss">T8-L1</span></div>
<div class="t " style="left:385px;top:161px;color:#6aa086"><span class="ss">4</span></div>
<svg class="a" style="left:438px;top:162px" width="14" height="12"><use href="#chk"/></svg>
<svg class="a" style="left:24px;top:142px" width="9" height="9"><use href="#minus"/></svg>
<svg class="a" style="left:43px;top:139px" width="8" height="16"><use href="#exc"/></svg>
<svg class="a" style="left:56px;top:141px" width="14" height="13"><use href="#fld"/></svg>
<div class="t " style="left:74px;top:141px;color:#222"><span class="ss">2</span></div>
<svg class="a" style="left:5px;top:182px" width="9" height="9"><use href="#plus"/></svg>
<svg class="a" style="left:24px;top:179px" width="8" height="16"><use href="#exc"/></svg>
<svg class="a" style="left:37px;top:181px" width="14" height="13"><use href="#fld"/></svg>
<div class="t " style="left:55px;top:181px;color:#222"><span class="ss">PROGRAM</span></div>
</div>
<div class="a" id="dlg">
<div class="a" style="left:0px;top:0px;width:238px;height:21px;background:linear-gradient(#7c7c7c 0,#6c6c6c 2px,#565656 7.500px,#1c1c1c 8px,#1c1c1c 100%);border-top:1px solid #9a9a9a;border-left:1px solid #777"></div>
<svg class="a" style="left:5px;top:5px" width="13" height="13" viewBox="0 0 15 15"><g fill="#fff"><circle cx="7.500" cy="7.500" r="5.200"/>
<rect x="6.100" y="0.300" width="2.800" height="3" transform="rotate(0 7.500 7.500)"/>
<rect x="6.100" y="0.300" width="2.800" height="3" transform="rotate(45 7.500 7.500)"/>
<rect x="6.100" y="0.300" width="2.800" height="3" transform="rotate(90 7.500 7.500)"/>
<rect x="6.100" y="0.300" width="2.800" height="3" transform="rotate(135 7.500 7.500)"/>
<rect x="6.100" y="0.300" width="2.800" height="3" transform="rotate(180 7.500 7.500)"/>
<rect x="6.100" y="0.300" width="2.800" height="3" transform="rotate(225 7.500 7.500)"/>
<rect x="6.100" y="0.300" width="2.800" height="3" transform="rotate(270 7.500 7.500)"/>
<rect x="6.100" y="0.300" width="2.800" height="3" transform="rotate(315 7.500 7.500)"/>
</g><circle cx="7.500" cy="7.500" r="3.100" fill="#1c1c1c"/><circle cx="7.500" cy="7.500" r="1.500" fill="#fff"/></svg>
<div class="a" style="left:21px;top:2px;width:1px;height:19px;background:#8c8c8c"></div>
<div class="t" style="left:27px;top:6px;color:#fff">后处理</div>
<div class="a" style="left:0px;top:22px;width:1px;height:495px;background:#8e8e8e"></div>
<div class="sech" style="top:26px"></div>
<div class="t b" style="left:13px;top:32px;">后处理器</div>
<div class="secb" style="top:49px;height:153px"></div>
<div class="sech" style="top:202px"></div>
<div class="t b" style="left:13px;top:208px;">输出文件</div>
<div class="secb" style="top:225px;height:105px"></div>
<div class="sech" style="top:330px"></div>
<div class="t b" style="left:13px;top:336px;">设置</div>
<div class="secb" style="top:353px;height:123px"></div>
<div class="a" style="left:15px;top:55px;width:224px;height:104px;background:#fff;border:1px solid #7a7a7a"></div>
<div class="a" style="left:17px;top:57px;width:222px;height:12px;background:#0078d7"></div>
<div class="t" style="left:16px;top:58px;color:#fff">无备刀</div>
<div class="t" style="left:16px;top:70px;color:#000">高精代码备刀</div>
<div class="t" style="left:16px;top:82px;color:#000">单段程式</div>
<div class="t" style="left:16px;top:94px;color:#000">手动换刀</div>
<div class="t" style="left:16px;top:106px;color:#000">子程式</div>
<div class="t" style="left:16px;top:118px;color:#000">侧铣</div>
<div class="t" style="left:16px;top:130px;color:#000">4轴</div>
<div class="t" style="left:16px;top:142px;color:#000">刀路转线</div>
<div class="t" style="left:14px;top:172px;color:#222">浏览以查找后处理器</div>
<div class="t" style="left:15px;top:234px;color:#111">文件名</div>
<div class="inp" style="left:16px;top:250px;width:227px;height:16px;"></div>
<div class="t" style="left:18px;top:252px;"><span class="ss">C:\Users\Administrator\Desktop\123</span></div>
<div class="t" style="left:15px;top:272px;color:#111">文件扩展名</div>
<div class="inp" style="left:218px;top:270px;width:25px;height:16px;"></div>
<div class="t" style="left:221px;top:272px;"><span class="ss">ptp</span></div>
<div class="t" style="left:15px;top:300px;color:#222">浏览以查找输出文件</div>
<div class="t" style="left:15px;top:364px;color:#111">单位</div>
<div class="inp" style="left:177px;top:360px;width:66px;height:18px;"></div>
<div class="t" style="left:181px;top:364px;">经后处理定</div>
<div class="inp" style="left:177px;top:426px;width:66px;height:18px;"></div>
<div class="t" style="left:181px;top:430px;">经后处理定</div>
<div class="inp" style="left:177px;top:448px;width:66px;height:18px;"></div>
<div class="t" style="left:181px;top:452px;">经后处理定</div>
<div class="a" style="left:15px;top:383px;width:16px;height:16px;border:1px solid #7f7f7f;border-radius:3px;background:linear-gradient(#f6f6f6 0%,#e9e9e9 45%,#cfcfcf 52%,#dedede 100%);box-shadow:0 0 0 1px #e6e6e6"></div>
<div class="t" style="left:33px;top:387px;color:#111">输出球心</div>
<div class="a" style="left:15px;top:405px;width:16px;height:16px;border:1px solid #5b6b80;border-radius:3px;background:linear-gradient(#f2f8ff 0%,#cfe6fb 45%,#7cc4f2 55%,#54c8f4 100%);box-shadow:0 0 0 1px #e6e6e6"></div>
<svg class="a" style="left:17px;top:407px" width="12" height="11" viewBox="0 0 12 11"><path d="M1 4.500 2.800 3 4.800 6 9.800.5 11.300 1.800 5 10.300Z" fill="#0a3a9a"/></svg>
<div class="t" style="left:33px;top:409px;color:#111">列出输出</div>
<div class="t" style="left:15px;top:430px;color:#111">输出警告</div>
<div class="t" style="left:15px;top:452px;color:#111">检查工具</div>
<div class="a" style="left:6px;top:479px;width:232px;height:1px;background:#fafafa"></div>
<div class="a" style="left:6px;top:478px;width:232px;height:1px;background:#c4c4c4"></div>
<div class="btn" style="left:103px;top:485px;width:52px;border-color:#4a7a3a;background:linear-gradient(#e6f8dc 0%,#9fdc84 40%,#56b83c 52%,#a6e488 100%)">确定</div>
<div class="btn" style="left:162px;top:485px;width:52px">应用</div>
<div class="btn" style="left:221px;top:485px;width:52px;text-align:left;padding-left:13px">取消</div>
<div class="a" style="left:0px;top:509px;width:238px;height:8px;background:#1c1c1c;border-top:1px solid #555"></div>
</div>
<div class="a" id="info">
<div class="ib" style="left:10px"><svg class="a" style="left:3px;top:7px" width="24" height="24" viewBox="0 0 24 24"><rect x="1" y="1" width="19" height="19" rx="1" fill="#4a63e0" stroke="#1c2a9a"/><rect x="4" y="1.500" width="12" height="8" fill="#fff"/><rect x="5" y="13" width="11" height="7" fill="#1a1a40"/><rect x="6.500" y="14.500" width="3" height="4.500" fill="#5a73f0"/><path d="M8 4l3.500-1L21 17l-3.500 2.500z" fill="#f6d21a" stroke="#a8860a" stroke-width=".6"/><path d="M8 4l-.8-2.200L11.500 3z" fill="#222"/><path d="M17.500 19.500 21 17l1.800 2.600-3.400 2.600z" fill="#e82020"/></svg></div>
<div class="ib" style="left:44px"><svg class="a" style="left:2px;top:6px" width="26" height="25" viewBox="0 0 26 25"><path d="M9 2l10 2-2 8-10-2z" fill="#fff" stroke="#9fb6da" stroke-width=".8"/><path d="M2 12l8-3 14 3v6l-9 5-13-5z" fill="#cfcfcf" stroke="#8a8a8a" stroke-width=".8"/><path d="M2 12l13 4 9-4" fill="none" stroke="#f4f4f4"/><path d="M15 16v7" stroke="#9a9a9a"/><path d="M4 15.500l9 3v2l-9-3z" fill="#444"/><path d="M5.500 18.500l6.500 2.300" stroke="#fff" stroke-width="1.500"/></svg></div>
<div class="ib" style="left:78px"><svg class="a" style="left:3px;top:7px" width="24" height="24" viewBox="0 0 24 24"><path d="M14 1 11 13M22 7 9 13" stroke="#c9a63a" stroke-width="2.600" stroke-linecap="round"/><path d="M14 1 11 13M22 7 9 13" stroke="#f2e3a0" stroke-width=".8"/><circle cx="4.500" cy="12.500" r="3" fill="none" stroke="#c9a020" stroke-width="1.800"/><circle cx="10" cy="19" r="3" fill="none" stroke="#c9a020" stroke-width="1.800"/></svg></div>
<div class="ib" style="left:112px"><svg class="a" style="left:4px;top:8px" width="22" height="22" viewBox="0 0 22 22"><path d="M1 1h8l3 3v10H1z" fill="#f2f4ff" stroke="#5a68d0"/><path d="M3 6h6M3 8.500h7M3 11h7" stroke="#8a94c8" stroke-width=".9"/><path d="M9 8h8l3 3v10H9z" fill="#f2f4ff" stroke="#5a68d0"/><path d="M11 13h6M11 15.500h7M11 18h7" stroke="#6a74a8" stroke-width=".9"/></svg></div>
<div class="ib" style="left:146px"><svg class="a" style="left:3px;top:6px" width="24" height="25" viewBox="0 0 24 25"><rect x="1" y="4" width="17" height="16" rx="1.500" fill="#f6c62a" stroke="#c79a10"/><rect x="3" y="6" width="13" height="12" fill="#fdf3c8"/><path d="M6 4.500V3h2.500Q9.500 1 10.500 3H13v1.500z" fill="#8a8a9a" stroke="#555" stroke-width=".5"/><path d="M8 11h8l3 3v9H8z" fill="#f4f6ff" stroke="#5a68d0"/><path d="M10 15.500h6M10 18h7M10 20.500h7" stroke="#4a7a8a" stroke-width="1"/></svg></div>
<div class="ib" style="left:180px"><svg class="a" style="left:6px;top:10px" width="17" height="17" viewBox="0 0 20 20"><path d="M2.500 1.500 18 18" stroke="#111" stroke-width="1.800"/><path d="M17 1.500 3 17.500" stroke="#222" stroke-width="2.800" stroke-linecap="round"/></svg></div>
<div class="ib" style="left:214px"><svg class="a" style="left:3px;top:7px" width="22" height="22" viewBox="0 0 22 22"><rect x=".5" y=".5" width="20" height="20" fill="#fff" stroke="#d40000" stroke-width="1.200"/><circle cx="10.500" cy="10.500" r="4.200" fill="none" stroke="#d40000" stroke-width="1.200"/><path d="M10.500 3v15M3 10.500h15" stroke="#000" stroke-width="1"/></svg></div>
<div class="ib" style="left:248px"><svg class="a" style="left:2px;top:8px" width="26" height="24" viewBox="0 0 24 22"><path d="M2 3l7-2 4 4-2 3 8 1 3 4-3 5-7-1-2-4-4 4z" fill="#8a8a8a" opacity=".35"/><path d="M1.500 3 9 1.500l2.500 4.500L5 9.500z" fill="#1c1c24"/><path d="M9 2l5 1 7 3-3 9-6-2z" fill="#2a2a34"/><ellipse cx="4.500" cy="7" rx="2.600" ry="2.900" fill="#6a78e8" stroke="#111"/><ellipse cx="15.500" cy="12" rx="3.300" ry="3.600" fill="#6a78e8" stroke="#111"/><circle cx="3.800" cy="6.200" r=".9" fill="#cdd3ff"/><circle cx="14.500" cy="11" r="1.100" fill="#cdd3ff"/></svg></div>
<div class="ib" style="left:282px;border-color:#c87838;box-shadow:0 0 0 1px #f8c9a0, inset 0 0 3px 1px #f0a060;background:linear-gradient(#fbe6d4,#f8c9a0 60%,#f3b483)"><svg class="a" style="left:2px;top:6px" width="24" height="24" viewBox="0 0 24 24"><rect x=".5" y=".5" width="22" height="22" fill="#fff" stroke="#000" stroke-width="1.100"/><path d="M3.500 4.500h16M3.500 9.500h16M3.500 14.500h14q2.500 0 2.500 2.500t-2.500 2.500H12" fill="none" stroke="#000" stroke-width="1"/><path d="M14.500 17 11.500 19.500l3 2.500" fill="none" stroke="#000" stroke-width="1"/></svg></div>
<div class="ib" style="left:316px"><svg class="a" style="left:7px;top:16px" width="16" height="5"><rect x="0" y="0.500" width="14.500" height="3.500" fill="#2448e0"/></svg></div>
</div>
<div class="a" id="list">
<div class="ir" style="top:0px"><div class="k">信息列表创建者</div><div class="s"></div><div class="v">Administrator</div></div>
<div class="ir alt" style="top:20px"><div class="k">日期</div><div class="s"></div><div class="v">05-Sep-2025 18:57:48</div></div>
<div class="ir" style="top:40px"><div class="k">当前工作部件</div><div class="s"></div><div class="v">D:\NC\158\2025\8\21E8-781-15202\21E8-781-15202.prt</div></div>
<div class="ir alt" style="top:60px"><div class="k">节点名</div><div class="s"></div><div class="v">pc-123456</div></div>
<div class="a" id="code"><pre>%
G40 G17 G49 G80
M09
G91 G28 Z0.0
T04 M06
M08
G00 G90 G54 X-11.063 Y-3.983 S3500 M03
G43 Z40. H04 M08
Z.015
G01 Z-.485 F500.
G41 X-10.965 Y-4. D04
G03 X-6.965 Y0.0 I0.0 J4. F250.
G02 X0.0 Y6.965 I6.965 J0.0 F500.
X6.965 Y0.0 I0.0 J-6.965
X0.0 Y-6.965 I-6.965 J0.0
X-6.965 Y0.0 I0.0 J6.965
G01 X-6.964 Y.142 Z-.49
X-6.959 Y.283 Z-.495
X-6.952 Y.425 Z-.5
X-6.942 Y.566 Z-.505
X-6.929 Y.707 Z-.51
X-6.913 Y.848 Z-.515
X-6.894 Y.989 Z-.52
X-6.873 Y1.129 Z-.525
X-6.849 Y1.268 Z-.53
X-6.821 Y1.407 Z-.534
X-6.791 Y1.546 Z-.539
X-6.758 Y1.684 Z-.544
X-6.723 Y1.821 Z-.549
X-6.684 Y1.957 Z-.554
X-6.643 Y2.093 Z-.559
X-6.599 Y2.228 Z-.564
X-6.552 Y2.361 Z-.569
X-6.503 Y2.494 Z-.574
X-6.451 Y2.626 Z-.579
X-6.396 Y2.757 Z-.584
X-6.339 Y2.886 Z-.589
X-6.280 Y3.014 Z-.594</pre></div>
<div class="a" id="sb"><div class="a" id="thumb"></div>
<svg class="a" style="left:4px;top:6px" width="9" height="6"><path d="M1 5 4.500 1.500 8 5" fill="none" stroke="#555" stroke-width="1.600"/></svg>
<svg class="a" style="left:4px;top:644px" width="9" height="6"><path d="M1 1 4.500 4.500 8 1" fill="none" stroke="#555" stroke-width="1.600"/></svg>
</div>
</div>
<div class="a" id="infobot"></div>
<div class="a" id="rs">
<div class="a" style="left:0;top:0;width:12px;height:25px;background:linear-gradient(#c0c0c0,#d0d0d0 60%,#c2c2c2);border-bottom:1px solid #a8a8a8;border-left:1px solid #9a9a9a"></div>
<div class="a" style="left:0;top:25px;width:12px;height:27px;background:linear-gradient(#d6d6d6,#d2d2d2);border-bottom:1px solid #9a9a9a;border-left:1px solid #9a9a9a"></div>
<div class="a" style="left:0;top:52px;width:12px;height:19px;background:#fff;border-bottom:1px solid #999"></div>
<div class="t" style="left:1px;top:55px;font-size:12px"><span class="ss" style="font-size:11px">7—</span></div>
</div>
<div class="t" style="left:1334px;top:677px;color:#8c8c8c;text-shadow:0 0 1px #fff"><span class="ss" style="font-size:15px;line-height:15px">UG</span></div>
<div class="t" style="left:1351px;top:677px;font-size:15px;line-height:15px;font-style:italic;letter-spacing:.3px;color:#8c8c8c;text-shadow:0 0 1px #fff">爱好者论坛</div>
<div class="t" style="left:1439px;top:677px;color:#8c8c8c;text-shadow:0 0 1px #fff"><span class="ss" style="font-size:15px;line-height:15px;letter-spacing:.4px">WWW.UGSNX.COM</span></div>
</body></html>
